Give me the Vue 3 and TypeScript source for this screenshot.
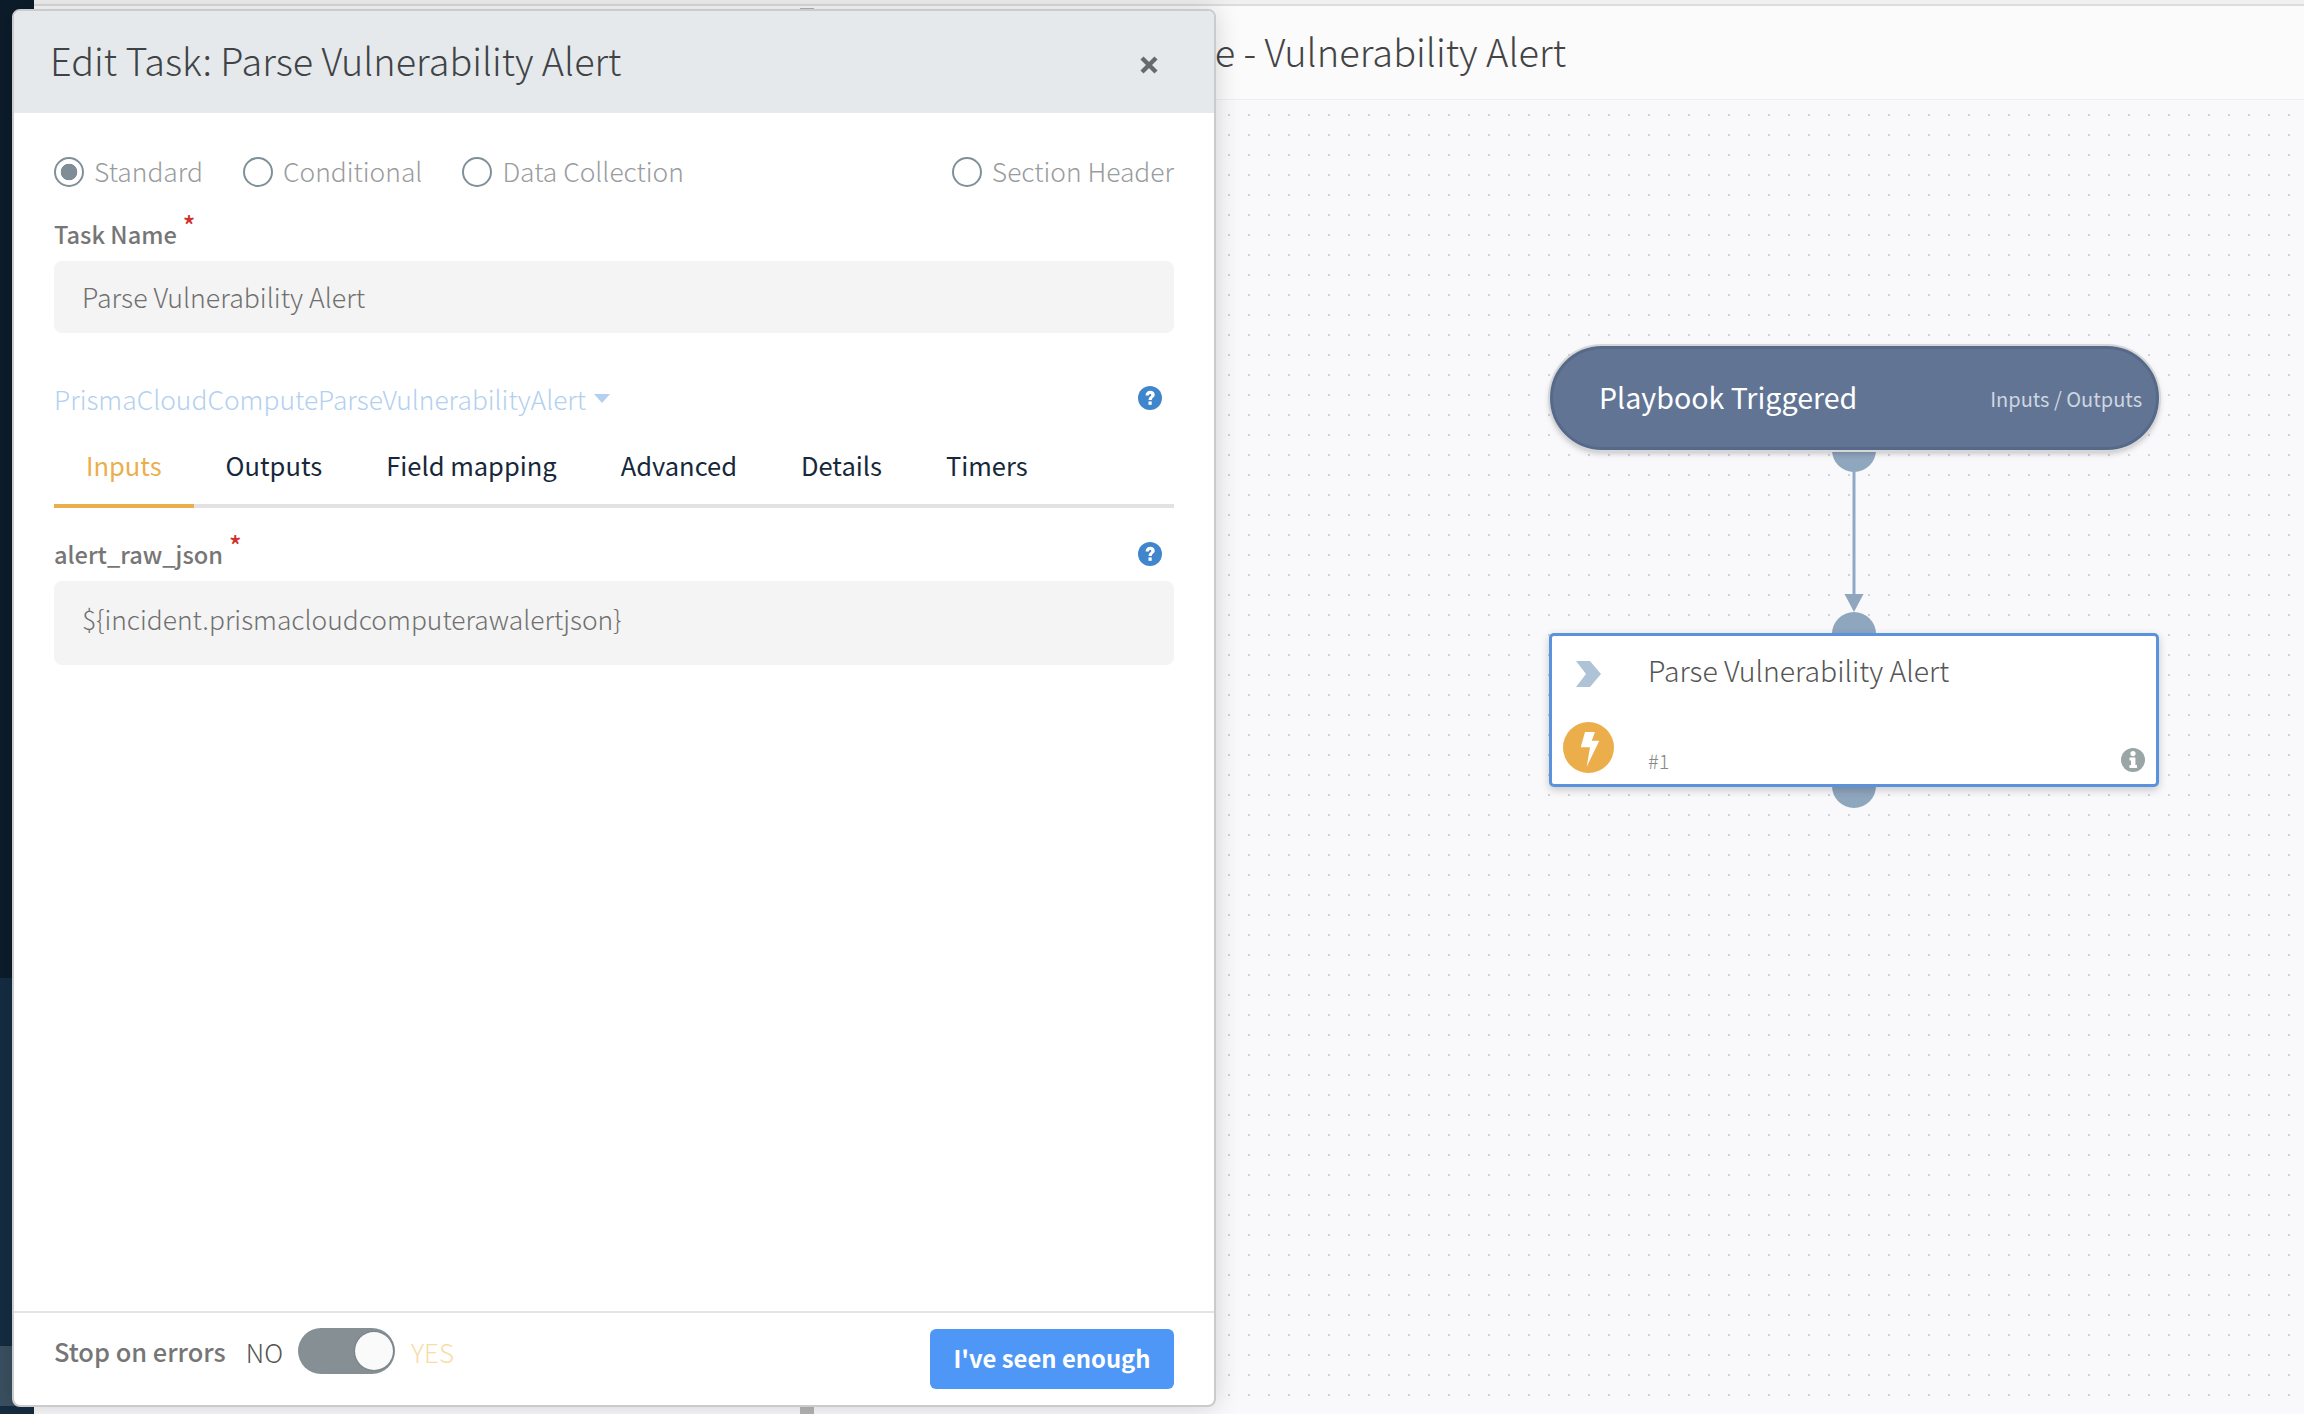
<template>
    <div class="page">
        <aside class="sidebar"></aside>

        <main class="main">
            <div class="top-strip"></div>
            <header class="page-header">
                <h1 class="page-title">Prisma Cloud Compute - Vulnerability Alert</h1>
            </header>

            <section class="canvas">
                <div class="splitter"></div>

                <div class="port port-start"></div>
                <div class="port port-task-in"></div>
                <div class="port port-task-out"></div>

                <svg class="edge" width="24" height="145" viewBox="0 0 24 145">
                    <path d="M12 0V126" stroke="#8fa9c6" stroke-width="3" fill="none" />
                    <path d="M2.5 124H21.5L12 142Z" fill="#8fa6bf" />
                </svg>

                <div class="node-start">
                    <span class="node-start-title">Playbook Triggered</span>
                    <span class="node-start-io">Inputs / Outputs</span>
                </div>

                <div class="node-task">
                    <svg class="task-chevron" width="25" height="26" viewBox="0 0 25 26">
                        <path d="M0 0H14L25 13L14 26H0L10 13Z" fill="#afc3d7" />
                    </svg>
                    <span class="task-title">Parse Vulnerability Alert</span>
                    <span class="task-bolt">
                        <svg width="51" height="51" viewBox="0 0 51 51">
                            <circle cx="25.5" cy="25.5" r="25.5" fill="#ebae4b" />
                            <path d="M22 10H32L28.7 18.7H36.3L23.7 44.7L27 25.3H17.7Z" fill="#fff" />
                        </svg>
                    </span>
                    <span class="task-number">#1</span>
                    <svg class="task-info" width="24" height="24" viewBox="0 0 24 24">
                        <circle cx="12" cy="12" r="12" fill="#9aa5a6" />
                        <circle cx="12" cy="5.6" r="2.6" fill="#fff" />
                        <path d="M8.5 9.6H14.4V17H16V20H8.5V17H10V12.6H8.5Z" fill="#fff" />
                    </svg>
                </div>
            </section>
        </main>

        <div class="modal">
            <div class="modal-header">
                <h2 class="modal-title">Edit Task: Parse Vulnerability Alert</h2>
                <svg class="modal-close" width="18" height="18" viewBox="0 0 18 18">
                    <path d="M2 2L16 16M16 2L2 16" stroke="#666a6e" stroke-width="4.4" fill="none" />
                </svg>
            </div>

            <div class="modal-body">
                <div class="radio-row">
                    <label
                        v-for="option in taskTypes"
                        :key="option.label"
                        class="radio"
                        :class="{ 'radio-last': option.last }"
                    >
                        <span class="radio-mark" :class="{ checked: option.checked }"></span>
                        <span class="radio-text">{{ option.label }}</span>
                    </label>
                </div>

                <div class="field-label task-label">Task Name<span class="required">*</span></div>
                <div class="input input-name">Parse Vulnerability Alert</div>

                <div class="script-row">
                    <span class="script-link">PrismaCloudComputeParseVulnerabilityAlert</span>
                    <span class="script-caret"></span>
                    <svg class="help" width="24" height="24" viewBox="0 0 24 24">
                        <circle cx="12" cy="12" r="12" fill="#3f86cc" />
                        <path
                            d="M7.6 9.4C7.6 6.6 9.6 4.8 12.2 4.8C14.8 4.8 16.7 6.4 16.7 8.8C16.7 11.6 13.8 11.8 13.8 14H10.6C10.6 10.6 13.3 10.5 13.3 9C13.3 8.3 12.8 7.9 12.1 7.9C11.3 7.9 10.9 8.5 10.9 9.4Z"
                            fill="#fff"
                        />
                        <rect x="10.5" y="15.4" width="3.2" height="3.4" fill="#fff" />
                    </svg>
                </div>

                <div class="tabs">
                    <div
                        v-for="tab in tabs"
                        :key="tab"
                        class="tab"
                        :class="{ active: tab === activeTab }"
                    >
                        {{ tab }}
                    </div>
                </div>

                <div class="arg-row">
                    <div class="field-label">alert_raw_json<span class="required">*</span></div>
                    <svg class="help" width="24" height="24" viewBox="0 0 24 24">
                        <circle cx="12" cy="12" r="12" fill="#3f86cc" />
                        <path
                            d="M7.6 9.4C7.6 6.6 9.6 4.8 12.2 4.8C14.8 4.8 16.7 6.4 16.7 8.8C16.7 11.6 13.8 11.8 13.8 14H10.6C10.6 10.6 13.3 10.5 13.3 9C13.3 8.3 12.8 7.9 12.1 7.9C11.3 7.9 10.9 8.5 10.9 9.4Z"
                            fill="#fff"
                        />
                        <rect x="10.5" y="15.4" width="3.2" height="3.4" fill="#fff" />
                    </svg>
                </div>
                <div class="input input-arg">${incident.prismacloudcomputerawalertjson}</div>
            </div>

            <div class="modal-footer">
                <span class="stop-label">Stop on errors</span>
                <span class="toggle-no">NO</span>
                <span class="toggle"><span class="toggle-knob"></span></span>
                <span class="toggle-yes">YES</span>
                <button class="primary-btn" type="button">I've seen enough</button>
            </div>
        </div>
    </div>
</template>

<script setup lang="ts">
interface TaskType {
    label: string;
    checked?: boolean;
    last?: boolean;
}

const taskTypes: TaskType[] = [
    { label: "Standard", checked: true },
    { label: "Conditional" },
    { label: "Data Collection" },
    { label: "Section Header", last: true },
];

const tabs = ["Inputs", "Outputs", "Field mapping", "Advanced", "Details", "Timers"];
const activeTab = "Inputs";
</script>

<style>
html,
body {
    margin: 0;
    background: #f9f9fb;
}
</style>

<style scoped>
.page {
    position: relative;
    display: flex;
    width: 2304px;
    height: 1414px;
    overflow: hidden;
    font-family: "Noto Sans CJK SC", "Noto Sans", sans-serif;
    color: #444;
}

.sidebar {
    flex: 0 0 34px;
    background: linear-gradient(
        #0c1c2a 0 978px,
        #152c42 978px 1346px,
        #3a5060 1346px 1406px,
        #152c42 1406px
    );
}

.main {
    flex: 1;
    display: flex;
    flex-direction: column;
    min-width: 0;
}

.top-strip {
    flex: none;
    height: 4px;
    background: #f0f0f0;
    border-bottom: 2px solid #dcdcdc;
}

.page-header {
    height: 94px;
    flex: none;
    display: flex;
    align-items: center;
    padding: 0 0 4px 804px;
    box-sizing: border-box;
    background: #fbfbfc;
    border-bottom: 1px solid #eeeef0;
}

.page-title {
    margin: 0;
    font-size: 38px;
    font-weight: 300;
    white-space: nowrap;
    color: #444;
}

.canvas {
    position: relative;
    flex: 1;
    background-color: #f9f9fb;
    background-image: radial-gradient(circle at 1px 1px, #cfd1d5 1px, transparent 1.4px);
    background-size: 20px 20px;
    background-position: 14px 14px;
}

.splitter {
    position: absolute;
    left: 766px;
    top: -92px;
    bottom: 0;
    width: 14px;
    background: #b5b5b5;
}

.port {
    position: absolute;
    left: 1798px;
    width: 44px;
    height: 44px;
    border-radius: 50%;
    background: #8fa6bf;
}

.port-start {
    top: 328px;
}

.port-task-in {
    top: 512px;
}

.port-task-out {
    top: 664px;
}

.edge {
    position: absolute;
    left: 1808px;
    top: 370px;
}

.node-start {
    position: absolute;
    left: 1516px;
    top: 246px;
    box-sizing: border-box;
    width: 609px;
    height: 104px;
    display: flex;
    align-items: center;
    justify-content: space-between;
    padding: 0 14px 0 46px;
    border: 3px solid #566988;
    border-radius: 52px;
    background: #617494;
    box-shadow: 0 0 0 2px #d5d6d9, 0 3px 6px rgba(0, 0, 0, 0.25);
}

.node-start-title {
    font-size: 28.6px;
    font-weight: 400;
    color: #fff;
    margin-top: -3px;
}

.node-start-io {
    font-size: 20px;
    color: #cfd6e0;
}

.node-task {
    position: absolute;
    left: 1515px;
    top: 533px;
    box-sizing: border-box;
    width: 610px;
    height: 154px;
    border: 3px solid #5a93dc;
    border-radius: 5px;
    background: #fff;
    box-shadow: 0 3px 8px rgba(0, 0, 0, 0.2);
}

.task-chevron {
    position: absolute;
    left: 24px;
    top: 25px;
}

.task-title {
    position: absolute;
    left: 96px;
    top: 13px;
    font-size: 28.4px;
    font-weight: 300;
    color: #555;
    white-space: nowrap;
}

.task-bolt {
    position: absolute;
    left: 11px;
    top: 86px;
    width: 51px;
    height: 51px;
}

.task-number {
    position: absolute;
    left: 96px;
    bottom: 9px;
    font-size: 20px;
    font-weight: 300;
    color: #888;
}

.task-info {
    position: absolute;
    right: 11px;
    bottom: 12px;
}

.modal {
    position: absolute;
    left: 12px;
    top: 9px;
    box-sizing: border-box;
    width: 1204px;
    height: 1398px;
    display: flex;
    flex-direction: column;
    background: #fff;
    border: 2px solid #c9cbcd;
    border-radius: 8px;
    box-shadow: 0 0 26px rgba(0, 0, 0, 0.16);
}

.modal-header {
    flex: none;
    height: 102px;
    display: flex;
    align-items: center;
    justify-content: space-between;
    padding: 0 56px 0 36px;
    background: #e5e9ec;
    border-radius: 6px 6px 0 0;
}

.modal-title {
    margin: 0 0 6px;
    font-size: 37.8px;
    font-weight: 300;
    color: #3f4346;
    white-space: nowrap;
}

.modal-close {
    margin-top: 6px;
}

.modal-body {
    flex: 1;
    padding: 0 40px;
}

.radio-row {
    display: flex;
    align-items: center;
    height: 30px;
    margin-top: 44px;
}

.radio {
    display: flex;
    align-items: center;
    gap: 10px;
    margin-right: 40px;
    font-size: 26.4px;
    font-weight: 300;
    color: #999c9e;
    white-space: nowrap;
}

.radio-text {
    margin-bottom: 4px;
}

.radio-last {
    margin-left: auto;
    margin-right: 0;
}

.radio-mark {
    box-sizing: border-box;
    width: 30px;
    height: 30px;
    border: 2px solid #7f9099;
    border-radius: 50%;
    background: #fff;
}

.radio-mark.checked {
    background: radial-gradient(circle, #7f8d96 0 8px, #fff 8.6px);
}

.field-label {
    position: relative;
    font-size: 23.6px;
    font-weight: 500;
    color: #767676;
    white-space: nowrap;
}

.required {
    margin-left: 6px;
    position: relative;
    top: -8px;
    font-size: 26px;
    line-height: 0;
    color: #d0312d;
}

.task-label {
    margin-top: 29px;
    line-height: 36px;
}

.input {
    box-sizing: border-box;
    display: flex;
    align-items: center;
    padding: 0 28px 2px;
    background: #f4f4f4;
    border-radius: 8px;
    font-size: 26.4px;
    font-weight: 300;
    color: #707070;
    white-space: nowrap;
}

.input-name {
    height: 72px;
    margin-top: 9px;
    font-size: 26.7px;
}

.input-arg {
    height: 84px;
    margin-top: 7px;
    padding-bottom: 10px;
}

.script-row {
    display: flex;
    align-items: center;
    height: 40px;
    margin-top: 45px;
}

.script-link {
    font-size: 26.4px;
    font-weight: 300;
    color: #b3d0f0;
    white-space: nowrap;
}

.script-caret {
    width: 0;
    height: 0;
    margin-left: 8px;
    border-left: 8.5px solid transparent;
    border-right: 8.5px solid transparent;
    border-top: 9px solid #b3d0f0;
}

.help {
    margin-left: auto;
    margin-right: 12px;
}

.tabs {
    display: flex;
    height: 60px;
    margin-top: 26px;
    border-bottom: 4px solid #e2e2e2;
}

.tab {
    position: relative;
    padding: 0 32px;
    font-size: 25.5px;
    font-weight: 400;
    line-height: 42px;
    color: #16283a;
    white-space: nowrap;
}

.tab.active {
    color: #eaaf4d;
}

.tab.active::after {
    content: "";
    position: absolute;
    left: 0;
    right: 0;
    bottom: -4px;
    height: 4px;
    background: #eaaf4d;
}

.arg-row {
    display: flex;
    align-items: center;
    height: 40px;
    margin-top: 26px;
}

.modal-footer {
    flex: none;
    height: 94px;
    display: flex;
    align-items: center;
    padding: 0 40px 16px;
    box-sizing: border-box;
    border-top: 2px solid #e4e4e4;
}

.stop-label {
    font-size: 25.4px;
    font-weight: 500;
    color: #767676;
    white-space: nowrap;
}

.toggle-no {
    margin-left: 20px;
    font-size: 26px;
    font-weight: 300;
    color: #555;
}

.toggle {
    position: relative;
    flex: none;
    width: 97px;
    height: 46px;
    margin-left: 15px;
    border-radius: 23px;
    background: #858f94;
}

.toggle-knob {
    position: absolute;
    right: 2px;
    top: 4px;
    width: 38px;
    height: 38px;
    border-radius: 50%;
    background: #fafafa;
    box-shadow: 0 0 2px rgba(0, 0, 0, 0.3);
}

.toggle-yes {
    margin-left: 16px;
    font-size: 26px;
    font-weight: 300;
    color: #f8dca5;
}

.primary-btn {
    margin-left: auto;
    margin-top: 16px;
    width: 244px;
    height: 60px;
    padding: 0 0 3px;
    border: none;
    border-radius: 6px;
    background: #4f97f7;
    color: #fff;
    font-family: inherit;
    font-size: 23.8px;
    font-weight: 700;
}
</style>
